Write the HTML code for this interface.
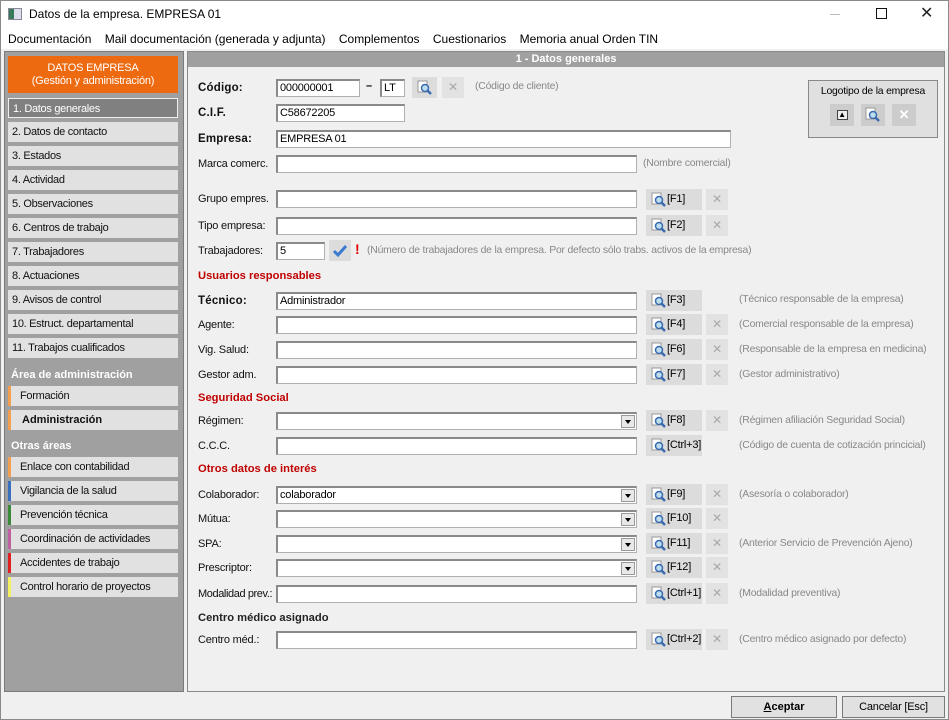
<!DOCTYPE html>
<html><head><meta charset="utf-8"><style>
*{box-sizing:border-box;margin:0;padding:0}
body{width:949px;height:720px;background:#f0f0f0;font-family:"Liberation Sans",Arial,sans-serif;font-size:11px;letter-spacing:-0.2px;color:#000;position:relative;overflow:hidden}
.a{position:absolute;white-space:nowrap}
#win{position:absolute;left:0;top:0;width:949px;height:720px;border:1px solid #8a8a8a}
.title{left:1px;top:1px;width:947px;height:29px;background:#fff}
.menu{left:1px;top:30px;width:947px;height:19px;background:#fff}
.side{left:4px;top:51px;width:180px;height:641px;background:#a0a0a0;border:1px solid #7a7a7a}
.it{position:absolute;left:8px;width:170px;height:20px;background:#e1e1e1;line-height:20px;padding-left:4px;color:#111;font-size:11px;letter-spacing:-0.3px}
.it.c{border-left:3px solid #f0a050;padding-left:9px}
.sh{position:absolute;left:11px;color:#fff;font-weight:bold;font-size:11px;letter-spacing:0}
.main{left:187px;top:51px;width:758px;height:641px;background:#f0f0f0;border:1px solid #8a8a8a}
.hdr{left:188px;top:52px;width:756px;height:15px;background:#a0a0a0;color:#fff;font-weight:bold;text-align:center;line-height:15px;font-size:11px;letter-spacing:0}
.lb{position:absolute;left:198px;line-height:18px;font-size:11px;color:#111;white-space:nowrap}
.b{font-weight:bold;font-size:11.5px;letter-spacing:0.2px}
.in{position:absolute;height:18px;background:#fff;border:1px solid #b0b0b0;border-top:2px solid #8a8a8a;border-left:2px solid #8a8a8a;line-height:15px;padding-left:2px;font-size:11px}
.dd{position:absolute;right:1px;top:1px;width:14px;height:13px;background:#e8e8e8;border:1px solid #999}
.dd:after{content:"";position:absolute;left:3px;top:4px;border-left:3px solid transparent;border-right:3px solid transparent;border-top:4px solid #000}
.sb{position:absolute;width:56px;height:21px;background:#dcdcdc;line-height:21px;padding-left:21px;font-size:11px}
.sb svg{position:absolute;left:5px;top:3px}
.xb{position:absolute;width:22px;height:21px;background:#e2e2e2;color:#a8a8a8;text-align:center;line-height:21px;font-size:12px}
.h{position:absolute;left:739px;color:#888;line-height:18px;font-size:10.4px;letter-spacing:-0.2px;white-space:nowrap}
.red{position:absolute;left:198px;color:#c00000;font-weight:bold;font-size:11.2px;letter-spacing:0}
.btn{position:absolute;top:696px;height:22px;background:#e1e1e1;border:1px solid #7a7a7a;text-align:center;line-height:20px;font-size:11px}
</style></head><body>
<div id="win"></div>
<div class="a title"></div>
<div class="a" style="left:8px;top:8px;width:14px;height:12px;background:#dde;border:1px solid #889"><div style="width:5px;height:10px;background:#3a7a5a"></div></div>
<div class="a" style="left:29px;top:7px;font-size:12px;letter-spacing:0">Datos de la empresa. EMPRESA 01</div>
<div class="a" style="left:830px;top:14px;width:10px;height:1px;background:#bbb"></div>
<div class="a" style="left:876px;top:8px;width:11px;height:11px;border:1px solid #111"></div>
<div class="a" style="left:920px;top:3px;font-size:16px;color:#222">✕</div>
<div class="a menu"></div>
<div class="a" style="left:8px;top:32px;font-size:12px;letter-spacing:0">Documentación&nbsp;&nbsp;&nbsp;&nbsp;Mail documentación (generada y adjunta)&nbsp;&nbsp;&nbsp;&nbsp;Complementos&nbsp;&nbsp;&nbsp;&nbsp;Cuestionarios&nbsp;&nbsp;&nbsp;&nbsp;Memoria anual Orden TIN</div>

<div class="a side"></div>
<div class="a" style="left:8px;top:56px;width:170px;height:37px;background:#ee6a10;color:#fff;text-align:center;font-size:11px;line-height:13px;padding-top:6px">DATOS EMPRESA<br>(Gestión y administración)</div>
<div class="it" style="top:98px;background:#808080;color:#fff;border:1px solid #eee">1. Datos generales</div>
<div class="it" style="top:122px">2. Datos de contacto</div>
<div class="it" style="top:146px">3. Estados</div>
<div class="it" style="top:170px">4. Actividad</div>
<div class="it" style="top:194px">5. Observaciones</div>
<div class="it" style="top:218px">6. Centros de trabajo</div>
<div class="it" style="top:242px">7. Trabajadores</div>
<div class="it" style="top:266px">8. Actuaciones</div>
<div class="it" style="top:290px">9. Avisos de control</div>
<div class="it" style="top:314px">10. Estruct. departamental</div>
<div class="it" style="top:338px">11. Trabajos cualificados</div>
<div class="sh" style="top:369px">Área de administración</div>
<div class="it c" style="top:386px">Formación</div>
<div class="it c" style="top:410px;padding-left:11px;font-weight:bold;letter-spacing:0">Administración</div>
<div class="sh" style="top:440px">Otras áreas</div>
<div class="it c" style="top:457px">Enlace con contabilidad</div>
<div class="it c" style="top:481px;border-left-color:#3a6fc0">Vigilancia de la salud</div>
<div class="it c" style="top:505px;border-left-color:#3a8a3a">Prevención técnica</div>
<div class="it c" style="top:529px;border-left-color:#c060a0">Coordinación de actividades</div>
<div class="it c" style="top:553px;border-left-color:#e02020">Accidentes de trabajo</div>
<div class="it c" style="top:577px;border-left-color:#f0f060">Control horario de proyectos</div>

<div class="a main"></div>
<div class="a hdr">1 - Datos generales</div>

<div class="a" style="left:808px;top:80px;width:130px;height:58px;background:#e0e0e0;border:1px solid #888"></div>
<div class="a" style="left:808px;top:86px;width:130px;text-align:center;font-size:10.4px">Logotipo de la empresa</div>
<div class="a" style="left:830px;top:104px;width:24px;height:22px;background:#ccc"><div style="margin:6px auto;width:11px;height:10px;border:1px solid #444;background:#eee;font-size:8px;line-height:8px;text-align:center">▲</div></div>
<div class="a" style="left:861px;top:104px;width:24px;height:22px;background:#ccc"><svg width="16" height="16" style="margin:3px 4px" viewBox="0 0 16 16"><rect x="1" y="1" width="9" height="11" fill="#fff" stroke="#999"/><circle cx="8" cy="8" r="3.5" fill="#bde" stroke="#3a6ab0" stroke-width="1.5"/><path d="M10.5 10.5L14 14" stroke="#3a6ab0" stroke-width="2.5"/></svg></div>
<div class="a" style="left:892px;top:104px;width:24px;height:22px;background:#ccc;color:#fff;text-align:center;line-height:22px;font-size:13px;font-weight:bold">✕</div>

<div class="lb b" style="top:79px">Código:</div>
<div class="in" style="left:276px;top:79px;width:84px">000000001</div>
<div class="a" style="left:366px;top:80px;font-weight:bold">–</div>
<div class="in" style="left:380px;top:79px;width:25px">LT</div>
<div class="sb" style="left:412px;top:77px;width:25px;padding:0"><svg width="16" height="16" viewBox="0 0 16 16"><rect x="1" y="1" width="9" height="11" fill="#fff" stroke="#999"/><circle cx="8" cy="8" r="3.5" fill="#bde" stroke="#3a6ab0" stroke-width="1.5"/><path d="M10.5 10.5L14 14" stroke="#3a6ab0" stroke-width="2.5"/></svg></div>
<div class="xb" style="left:442px;top:77px">✕</div>
<div class="h" style="left:475px;top:78px">(Código de cliente)</div>

<div class="lb b" style="top:104px">C.I.F.</div>
<div class="in" style="left:276px;top:104px;width:129px">C58672205</div>

<div class="lb b" style="top:130px">Empresa:</div>
<div class="in" style="left:276px;top:130px;width:455px">EMPRESA 01</div>

<div class="lb" style="top:155px">Marca comerc.</div>
<div class="in" style="left:276px;top:155px;width:361px"></div>
<div class="h" style="left:643px;top:155px">(Nombre comercial)</div>

<div class="lb" style="top:190px">Grupo empres.</div>
<div class="in" style="left:276px;top:190px;width:361px"></div>
<div class="lb" style="top:217px">Tipo empresa:</div>
<div class="in" style="left:276px;top:217px;width:361px"></div>

<div class="lb" style="top:242px">Trabajadores:</div>
<div class="in" style="left:276px;top:242px;width:49px">5</div>
<div class="a" style="left:329px;top:240px;width:22px;height:21px;background:#dcdcdc"><svg width="16" height="14" style="margin:4px 3px" viewBox="0 0 16 14"><path d="M2 7L6 11L14 2" stroke="#3a7ad0" stroke-width="3" fill="none"/></svg></div>
<div class="a" style="left:355px;top:241px;color:#e00000;font-weight:bold;font-size:14px">!</div>
<div class="h" style="left:367px;top:242px">(Número de trabajadores de la empresa. Por defecto sólo trabs. activos de la empresa)</div>

<div class="red" style="top:270px">Usuarios responsables</div>
<div class="lb b" style="top:292px">Técnico:</div>
<div class="in" style="left:276px;top:292px;width:361px">Administrador</div>
<div class="lb" style="top:316px">Agente:</div>
<div class="in" style="left:276px;top:316px;width:361px"></div>
<div class="lb" style="top:341px">Vig. Salud:</div>
<div class="in" style="left:276px;top:341px;width:361px"></div>
<div class="lb" style="top:366px">Gestor adm.</div>
<div class="in" style="left:276px;top:366px;width:361px"></div>

<div class="red" style="top:392px">Seguridad Social</div>
<div class="lb" style="top:412px">Régimen:</div>
<div class="in" style="left:276px;top:412px;width:361px"><div class="dd"></div></div>
<div class="lb" style="top:437px">C.C.C.</div>
<div class="in" style="left:276px;top:437px;width:361px"></div>

<div class="red" style="top:463px">Otros datos de interés</div>
<div class="lb" style="top:486px">Colaborador:</div>
<div class="in" style="left:276px;top:486px;width:361px">colaborador<div class="dd"></div></div>
<div class="lb" style="top:510px">Mútua:</div>
<div class="in" style="left:276px;top:510px;width:361px"><div class="dd"></div></div>
<div class="lb" style="top:535px">SPA:</div>
<div class="in" style="left:276px;top:535px;width:361px"><div class="dd"></div></div>
<div class="lb" style="top:559px">Prescriptor:</div>
<div class="in" style="left:276px;top:559px;width:361px"><div class="dd"></div></div>
<div class="lb" style="top:585px;letter-spacing:-0.4px">Modalidad prev.:</div>
<div class="in" style="left:276px;top:585px;width:361px"></div>

<div class="a" style="left:198px;top:612px;font-size:11.2px;font-weight:bold;letter-spacing:0;color:#222">Centro médico asignado</div>
<div class="lb" style="top:631px">Centro méd.:</div>
<div class="in" style="left:276px;top:631px;width:361px"></div>

<div class="sb" style="left:646px;top:189px"><svg width="16" height="16" viewBox="0 0 16 16"><rect x="1" y="1" width="9" height="11" fill="#fff" stroke="#999"/><circle cx="8" cy="8" r="3.5" fill="#bde" stroke="#3a6ab0" stroke-width="1.5"/><path d="M10.5 10.5L14 14" stroke="#3a6ab0" stroke-width="2.5"/></svg>[F1]</div><div class="xb" style="left:706px;top:189px">✕</div>
<div class="sb" style="left:646px;top:215px"><svg width="16" height="16" viewBox="0 0 16 16"><rect x="1" y="1" width="9" height="11" fill="#fff" stroke="#999"/><circle cx="8" cy="8" r="3.5" fill="#bde" stroke="#3a6ab0" stroke-width="1.5"/><path d="M10.5 10.5L14 14" stroke="#3a6ab0" stroke-width="2.5"/></svg>[F2]</div><div class="xb" style="left:706px;top:215px">✕</div>
<div class="sb" style="left:646px;top:290px"><svg width="16" height="16" viewBox="0 0 16 16"><rect x="1" y="1" width="9" height="11" fill="#fff" stroke="#999"/><circle cx="8" cy="8" r="3.5" fill="#bde" stroke="#3a6ab0" stroke-width="1.5"/><path d="M10.5 10.5L14 14" stroke="#3a6ab0" stroke-width="2.5"/></svg>[F3]</div>
<div class="h" style="top:291px">(Técnico responsable de la empresa)</div>
<div class="sb" style="left:646px;top:314px"><svg width="16" height="16" viewBox="0 0 16 16"><rect x="1" y="1" width="9" height="11" fill="#fff" stroke="#999"/><circle cx="8" cy="8" r="3.5" fill="#bde" stroke="#3a6ab0" stroke-width="1.5"/><path d="M10.5 10.5L14 14" stroke="#3a6ab0" stroke-width="2.5"/></svg>[F4]</div><div class="xb" style="left:706px;top:314px">✕</div>
<div class="h" style="top:316px">(Comercial responsable de la empresa)</div>
<div class="sb" style="left:646px;top:339px"><svg width="16" height="16" viewBox="0 0 16 16"><rect x="1" y="1" width="9" height="11" fill="#fff" stroke="#999"/><circle cx="8" cy="8" r="3.5" fill="#bde" stroke="#3a6ab0" stroke-width="1.5"/><path d="M10.5 10.5L14 14" stroke="#3a6ab0" stroke-width="2.5"/></svg>[F6]</div><div class="xb" style="left:706px;top:339px">✕</div>
<div class="h" style="top:341px">(Responsable de la empresa en medicina)</div>
<div class="sb" style="left:646px;top:364px"><svg width="16" height="16" viewBox="0 0 16 16"><rect x="1" y="1" width="9" height="11" fill="#fff" stroke="#999"/><circle cx="8" cy="8" r="3.5" fill="#bde" stroke="#3a6ab0" stroke-width="1.5"/><path d="M10.5 10.5L14 14" stroke="#3a6ab0" stroke-width="2.5"/></svg>[F7]</div><div class="xb" style="left:706px;top:364px">✕</div>
<div class="h" style="top:366px">(Gestor administrativo)</div>
<div class="sb" style="left:646px;top:410px"><svg width="16" height="16" viewBox="0 0 16 16"><rect x="1" y="1" width="9" height="11" fill="#fff" stroke="#999"/><circle cx="8" cy="8" r="3.5" fill="#bde" stroke="#3a6ab0" stroke-width="1.5"/><path d="M10.5 10.5L14 14" stroke="#3a6ab0" stroke-width="2.5"/></svg>[F8]</div><div class="xb" style="left:706px;top:410px">✕</div>
<div class="h" style="top:412px">(Régimen afiliación Seguridad Social)</div>
<div class="sb" style="left:646px;top:435px"><svg width="16" height="16" viewBox="0 0 16 16"><rect x="1" y="1" width="9" height="11" fill="#fff" stroke="#999"/><circle cx="8" cy="8" r="3.5" fill="#bde" stroke="#3a6ab0" stroke-width="1.5"/><path d="M10.5 10.5L14 14" stroke="#3a6ab0" stroke-width="2.5"/></svg>[Ctrl+3]</div>
<div class="h" style="top:437px">(Código de cuenta de cotización princicial)</div>
<div class="sb" style="left:646px;top:484px"><svg width="16" height="16" viewBox="0 0 16 16"><rect x="1" y="1" width="9" height="11" fill="#fff" stroke="#999"/><circle cx="8" cy="8" r="3.5" fill="#bde" stroke="#3a6ab0" stroke-width="1.5"/><path d="M10.5 10.5L14 14" stroke="#3a6ab0" stroke-width="2.5"/></svg>[F9]</div><div class="xb" style="left:706px;top:484px">✕</div>
<div class="h" style="top:486px">(Asesoría o colaborador)</div>
<div class="sb" style="left:646px;top:508px"><svg width="16" height="16" viewBox="0 0 16 16"><rect x="1" y="1" width="9" height="11" fill="#fff" stroke="#999"/><circle cx="8" cy="8" r="3.5" fill="#bde" stroke="#3a6ab0" stroke-width="1.5"/><path d="M10.5 10.5L14 14" stroke="#3a6ab0" stroke-width="2.5"/></svg>[F10]</div><div class="xb" style="left:706px;top:508px">✕</div>
<div class="sb" style="left:646px;top:533px"><svg width="16" height="16" viewBox="0 0 16 16"><rect x="1" y="1" width="9" height="11" fill="#fff" stroke="#999"/><circle cx="8" cy="8" r="3.5" fill="#bde" stroke="#3a6ab0" stroke-width="1.5"/><path d="M10.5 10.5L14 14" stroke="#3a6ab0" stroke-width="2.5"/></svg>[F11]</div><div class="xb" style="left:706px;top:533px">✕</div>
<div class="h" style="top:535px">(Anterior Servicio de Prevención Ajeno)</div>
<div class="sb" style="left:646px;top:557px"><svg width="16" height="16" viewBox="0 0 16 16"><rect x="1" y="1" width="9" height="11" fill="#fff" stroke="#999"/><circle cx="8" cy="8" r="3.5" fill="#bde" stroke="#3a6ab0" stroke-width="1.5"/><path d="M10.5 10.5L14 14" stroke="#3a6ab0" stroke-width="2.5"/></svg>[F12]</div><div class="xb" style="left:706px;top:557px">✕</div>
<div class="sb" style="left:646px;top:583px"><svg width="16" height="16" viewBox="0 0 16 16"><rect x="1" y="1" width="9" height="11" fill="#fff" stroke="#999"/><circle cx="8" cy="8" r="3.5" fill="#bde" stroke="#3a6ab0" stroke-width="1.5"/><path d="M10.5 10.5L14 14" stroke="#3a6ab0" stroke-width="2.5"/></svg>[Ctrl+1]</div><div class="xb" style="left:706px;top:583px">✕</div>
<div class="h" style="top:585px">(Modalidad preventiva)</div>
<div class="sb" style="left:646px;top:629px"><svg width="16" height="16" viewBox="0 0 16 16"><rect x="1" y="1" width="9" height="11" fill="#fff" stroke="#999"/><circle cx="8" cy="8" r="3.5" fill="#bde" stroke="#3a6ab0" stroke-width="1.5"/><path d="M10.5 10.5L14 14" stroke="#3a6ab0" stroke-width="2.5"/></svg>[Ctrl+2]</div><div class="xb" style="left:706px;top:629px">✕</div>
<div class="h" style="top:631px">(Centro médico asignado por defecto)</div>

<div class="btn" style="left:731px;width:106px;font-weight:bold;letter-spacing:0"><u>A</u>ceptar</div>
<div class="btn" style="left:842px;width:103px">Cancelar [Esc]</div>
</body></html>
